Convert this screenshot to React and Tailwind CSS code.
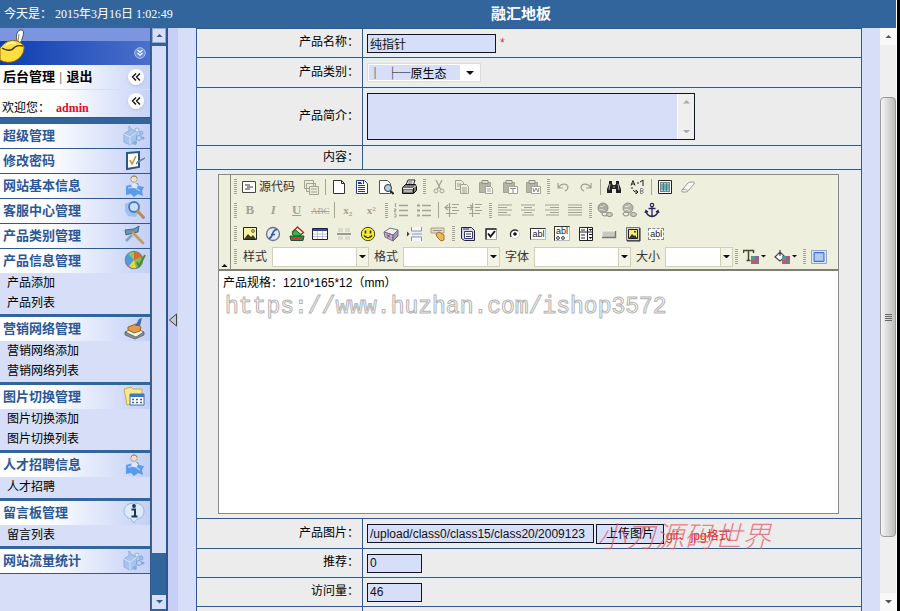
import { useState } from "react";

const G = "#a3a394";

// small toolbar drawings, all on a 16x16 grid
const icons = {
  source: (
    <>
      <path d="M1.5 2.5h13v11h-13z" fill="#fff" stroke="#444" />
      <path d="M4 6h5M6 8h6M4 10h5" stroke="#333" />
    </>
  ),
  templates: (
    <>
      <path d="M1.5 1.5h9v8h-9zM3.5 4.5h9v8h-9z" fill="#ededdc" stroke={G} />
      <path d="M6.500 7.500h9v8h-9zM8 10h6M8 13h6" fill="#ededdc" stroke={G} />
    </>
  ),
  page: <path d="M2.500 1.500h8l3 3v10h-11zM10.500 1.500v3h3" fill="#fff" stroke="#333" />,
  doc: (
    <>
      <path d="M2.500 1.500h8l3 3v10h-11z" fill="#fff" stroke="#223a8a" />
      <path d="M4 4.500h4M4 6.500h7M4 8.500h7M4 10.500h7M4 12.500h7M9.500 2v3M4 3.500h3" stroke="#223a8a" />
    </>
  ),
  preview: (
    <>
      <path d="M1.500 1.500h8l3 3v10h-11z" fill="#fff" stroke="#555" />
      <circle cx="10" cy="9" r="3.500" fill="#a9d4de" stroke="#333" />
      <path d="M12.500 12l3 3" stroke="#222" strokeWidth="2" />
    </>
  ),
  print: (
    <>
      <path d="M5 6l2-5h7l-2 6" fill="#fff" stroke="#222" />
      <path d="M7.500 3h4M7 5h4" stroke="#555" />
      <path d="M1.500 8.500l3-3h10l1 2v4l-3 3h-11z" fill="#77776f" stroke="#111" />
      <path d="M2 9.500h10l3-3M3 12h8" stroke="#eee" />
      <path d="M12.500 9v5" stroke="#111" />
    </>
  ),
  cut: (
    <>
      <path d="M5 1l4.500 9M11 1L6.500 10" stroke={G} strokeWidth="1.300" />
      <circle cx="5" cy="12" r="2" stroke={G} />
      <circle cx="11" cy="12" r="2" stroke={G} />
    </>
  ),
  copy: (
    <>
      <path d="M1.500 1.500h6l2 2v7h-8zM3 5h4M3 7h4" fill="#ededdc" stroke={G} />
      <path d="M6.500 5.500h6l2 2v7h-8zM8 9h5M8 11h5M8 13h5" fill="#ededdc" stroke={G} />
    </>
  ),
  paste: (
    <>
      <path d="M1.500 3.500h11v10h-11z" fill="#b5b5a5" stroke={G} />
      <path d="M4 1.500h6v3H4z" fill="#ddd" stroke="#8f8f82" />
      <path d="M7.500 7.500h5l2 2v5h-7zM9 10h4M9 12h4" fill="#fff" stroke={G} />
    </>
  ),
  pasteText: (
    <>
      <path d="M1.500 3.500h11v10h-11z" fill="#b5b5a5" stroke={G} />
      <path d="M4 1.500h6v3H4z" fill="#ddd" stroke="#8f8f82" />
      <path d="M6.500 7.500h9v7h-9z" fill="#fff" stroke={G} />
      <path d="M8 9.500h6M11 9.500V14" stroke="#888" />
    </>
  ),
  pasteWord: (
    <>
      <path d="M1.500 3.500h11v10h-11z" fill="#b5b5a5" stroke={G} />
      <path d="M4 1.500h6v3H4z" fill="#ddd" stroke="#8f8f82" />
      <path d="M6.500 7.500h9v7h-9z" fill="#fff" stroke={G} />
      <path d="M8 9l1 4 2-4 2 4 1-4" stroke="#888" />
    </>
  ),
  undo: <path d="M3 4v5h5M3.500 8.500C6 4 12 4 13 8c0 2-1 3-3 4" stroke={G} strokeWidth="1.200" />,
  redo: <path d="M13 4v5H8M12.500 8.500C10 4 4 4 3 8c0 2 1 3 3 4" stroke={G} strokeWidth="1.200" />,
  find: (
    <>
      <path d="M3 2h3v3l1 1h2l1-1V2h3v3l2 5v4h-5v-4H6v4H1v-4l2-5z" fill="#222" />
      <path d="M4 5l-1 6M12 5l1 6M8 7v2" stroke="#aaa" />
    </>
  ),
  replace: (
    <>
      <path d="M2 6.500l2-5 2 5M2.800 5h2.600" stroke="#222" />
      <path d="M11.500 9.500v5h2q1.500-1.200 0-2.500h-2 2q1.500-1.200 0-2.500z" stroke="#888" />
      <path d="M8 4h2M11 3l3-2v4M14 5v2M3 8v2M4 11l2 2M7 11v4l2-2z" stroke="#222" />
    </>
  ),
  selectAll: (
    <>
      <path d="M1.500 1.500h13v13h-13z" fill="#fff" stroke="#222" />
      <path d="M3.500 3.500h9v9h-9z" fill="#9fd5de" stroke="#222" strokeDasharray="1 1" />
      <path d="M4 6h8M4 8h8M4 10h8M6.500 4v8M9.500 4v8" stroke="#35707b" strokeWidth=".8" />
    </>
  ),
  eraser: <path d="M2 11l6-7q1-1 3-1h2q2 0 1 2l-6 7q-1 1-3 1H3q-2 0-1-2zM2 10.500q4-1 5.500 1" fill="#fafaf2" stroke="#999" />,
  ol: (
    <>
      <path d="M6 3.500h9M6 8.500h9M6 13.500h9" stroke={G} strokeWidth="1.300" />
      <path d="M2.500 1v4M1 7h2v1.500H1.500V10H3M1 12h2v3H1" stroke={G} />
    </>
  ),
  ul: (
    <>
      <path d="M6 3.500h9M6 8.500h9M6 13.500h9" stroke={G} strokeWidth="1.300" />
      <path d="M1 2.500h3v2H1zM1 7.500h3v2H1zM1 12.500h3v2H1z" fill={G} />
    </>
  ),
  outdent: <path d="M8 2.500h7M8 5.500h5M8 8.500h7M2 11.500h11M1 5.500h6M4 3L1 5.500 4 8M5.500 1v14" stroke={G} strokeWidth="1.200" />,
  indent: <path d="M8 2.500h7M8 5.500h5M8 8.500h7M2 11.500h11M0 5.500h5M3 3l3 2.500L3 8M5.500 1v14" stroke={G} strokeWidth="1.200" />,
  left: <path d="M1 3h14M1 5.500h9M1 8h14M1 10.500h9M1 13h13" stroke={G} strokeWidth="1.200" />,
  center: <path d="M1 3h14M4 5.500h8M1 8h14M4 10.500h8M2 13h12" stroke={G} strokeWidth="1.200" />,
  right: <path d="M1 3h14M6 5.500h9M1 8h14M6 10.500h9M2 13h13" stroke={G} strokeWidth="1.200" />,
  justify: <path d="M1 3h14M1 5.500h14M1 8h14M1 10.500h14M1 13h14" stroke={G} strokeWidth="1.200" />,
  link: (
    <>
      <circle cx="6" cy="6" r="5" fill="#a9a99c" stroke="#96968a" />
      <path d="M3 4q2 2 5-1M2 8q3-2 6 1" stroke="#ddd" />
      <ellipse cx="8" cy="12" rx="3" ry="2" fill="#ededdc" stroke="#88887c" />
      <ellipse cx="12.500" cy="12.500" rx="3" ry="2" fill="#ccccbf" stroke="#88887c" />
    </>
  ),
  unlink: (
    <>
      <circle cx="7" cy="6" r="5" fill="#b5b5a8" stroke="#96968a" />
      <path d="M4 4q2 2 5-1M3 8q3-2 6 1" stroke="#e5e5e5" />
      <ellipse cx="5" cy="12" rx="3" ry="2" fill="#ededdc" stroke="#88887c" />
      <ellipse cx="12.500" cy="12.500" rx="3" ry="2" fill="#ccccbf" stroke="#88887c" />
    </>
  ),
  anchor: (
    <>
      <circle cx="8" cy="3" r="1.700" stroke="#26265f" strokeWidth="1.200" />
      <path d="M8 5v9M4.500 6.500h7M2 9q1 5 6 5.500Q13 14 14 9M1 11l1-2.500L4 10M12 10l2-1.500 1 2.500" stroke="#26265f" strokeWidth="1.300" />
    </>
  ),
  image: (
    <>
      <path d="M1.500 1.500h13v12h-13z" fill="#f7f3a4" stroke="#222" />
      <path d="M2 13l4-5 3 3 2-2 3 4z" fill="#3d3d1b" />
      <circle cx="11" cy="5" r="1.500" fill="#e2b63b" stroke="#333" strokeWidth=".6" />
    </>
  ),
  flash: (
    <>
      <circle cx="8" cy="8" r="6.500" fill="#e3e9f5" stroke="#6a7488" strokeWidth="1.300" />
      <path d="M12 3.500Q8.500 4 7.500 8T4 12.500M6 8.500h4" stroke="#36589f" strokeWidth="1.600" />
    </>
  ),
  gallery: (
    <>
      <path d="M8.500 1l6 5.500-5 4.500-6-5z" fill="#f4f1d0" stroke="#b3281e" strokeWidth="1.300" />
      <path d="M6 3.500l6 5-4 3.500-5-4z" fill="#39b54a" stroke="#116633" />
      <path d="M1 10h14l-1 4.500H2z" fill="#1f9a39" stroke="#115533" />
      <path d="M3 12.500h9" stroke="#dd3333" />
    </>
  ),
  table: (
    <>
      <path d="M.500 2.500h15v11H.500z" fill="#fff" stroke="#222233" />
      <path d="M1 3h14v2H1z" fill="#2f4ba0" />
      <path d="M1 8h14M1 10.500h14M5.500 5v8M10.500 5v8" stroke="#aaaabb" strokeWidth=".7" />
    </>
  ),
  hr: (
    <>
      <path d="M2 3h5M9 3h5M2 5h5M9 5h5M2 11h5M9 11h5M2 13h5M9 13h5" stroke="#c8c8bb" />
      <path d="M1 8h14" stroke="#999" strokeWidth="2" />
    </>
  ),
  smiley: (
    <>
      <circle cx="8" cy="8" r="6.700" fill="#f5ea34" stroke="#4d4a12" />
      <path d="M5.500 4.500v3M10.500 4.500v3" stroke="#222" strokeWidth="1.500" />
      <path d="M4 9.500q4 4.500 8 0" stroke="#222" strokeWidth="1.200" />
    </>
  ),
  special: (
    <>
      <path d="M1 6l6-4 8 2-5 5z" fill="#eee" stroke="#777" />
      <path d="M1 6l9 3v6l-8-4z" fill="#c3b2cf" stroke="#776a88" />
      <path d="M10 9l5-5v6l-5 5z" fill="#9f9bb9" stroke="#666677" />
      <path d="M4 8.500l3 3M6.500 8.500l-2 3" stroke="#a12a5a" />
    </>
  ),
  pageBreak: (
    <>
      <path d="M4.500 1v4h10V1M4.500 15v-4h10v4" fill="#f5f8ff" stroke="#7d93c8" />
      <path d="M5 8h10" stroke="#8d9cc4" />
      <path d="M0 5.500l2.500 2.500L0 10.500z" fill="#333355" />
    </>
  ),
  universal: (
    <>
      <path d="M1 2h13v5H1z" fill="#e1dcc4" stroke="#aa9f83" />
      <path d="M3 4.500h9" stroke="#999" />
      <path d="M6 8l3-2 5 3v5l-3 1-4-4z" fill="#eeb85a" stroke="#a6732b" />
    </>
  ),
  form: (
    <>
      <path d="M1.500 1.500h10l3 3v10h-10l-3-2z" fill="#d8daf3" stroke="#222233" />
      <path d="M4.500 5.500h8v7h-8z" fill="#fff" stroke="#33386f" />
      <path d="M6 8h5M6 10.500h5M3 3h6" stroke="#33386f" />
    </>
  ),
  checkbox: (
    <>
      <path d="M3 3h10.500v10.500H3z" fill="#fff" stroke="#aaa" />
      <path d="M3 13.500V3h10.500" stroke="#222" strokeWidth="1.400" />
      <path d="M5 7.500l2.500 3L12 5" stroke="#111" strokeWidth="1.900" />
    </>
  ),
  radio: (
    <>
      <circle cx="8" cy="8" r="4.500" fill="#fff" stroke="#ccc" />
      <path d="M4 11Q2.500 7 5 5t6 0" stroke="#333" strokeWidth="1.300" />
      <circle cx="8" cy="8" r="1.800" fill="#111" />
    </>
  ),
  select: (
    <>
      <path d="M1.500 1.500h13v13h-13z" fill="#fff" stroke="#222" />
      <path d="M9.500 1.500v13M1.500 6h13M3 4h4M3 9h4M3 12h4" stroke="#222" />
      <path d="M10.500 3h4l-2 2zM10.500 11h4l-2 2z" fill="#111" />
      <path d="M11 8.500h3" stroke="#111" />
    </>
  ),
  button: (
    <>
      <path d="M1 5h13v6H1z" fill="#c9c9c2" />
      <path d="M1 11.500h13.500V5" stroke="#777" strokeWidth="1.400" />
      <path d="M1 11V5h13" stroke="#f5f5f5" />
    </>
  ),
  imageButton: (
    <>
      <path d="M1.500 1.500h13v13h-13z" fill="#d6d6cc" stroke="#777" />
      <path d="M3.500 3.500h9v9h-9z" fill="#f2ee74" stroke="#222" />
      <path d="M4 12l3-4 2 2 1-1 2 3z" fill="#333" />
      <circle cx="10" cy="5.800" r="1" fill="#333" />
      <path d="M15 2v13H2" stroke="#222" />
    </>
  ),
  fit: (
    <>
      <path d="M.500 1.500h15v13H.500z" fill="#dbe8fb" stroke="#8aa5d6" />
      <path d="M3 3.500h10v9H3z" fill="#8db3ec" stroke="#4a74b8" />
      <path d="M4 6h8M4 8h8M4 10h8" stroke="#cfe0fa" />
    </>
  ),
  textColor: (
    <>
      <path d="M0.500 4V1.500h10V4M5.500 1.500V11M3.500 11.500h4" stroke="#4a4632" strokeWidth="1.500" />
      <path d="M8 7h4v4H8z" fill="#4f9a93" />
      <path d="M12 7h4v4h-4z" fill="#a45a8a" />
      <path d="M8 11h4v4H8z" fill="#c3586a" />
      <path d="M12 11h4v4h-4z" fill="#77788a" />
    </>
  ),
  bgColor: (
    <>
      <path d="M1 8l5-5 5 5-5 4zM6 7V1" fill="#fff" stroke="#444" strokeWidth="1.200" />
      <path d="M8 7h4v4H8z" fill="#4f9a93" />
      <path d="M12 7h4v4h-4z" fill="#a45a8a" />
      <path d="M8 11h4v4H8z" fill="#c3586a" />
      <path d="M12 11h4v4h-4z" fill="#77788a" />
    </>
  ),
};

// buttons whose face is lettering
const letters = {
  bold: <b className="text-[13px]">B</b>,
  italic: <i className="text-[13px] font-bold">I</i>,
  underline: <u className="text-[13px] font-bold">U</u>,
  strike: <s className="text-[9px]">ABC</s>,
  sub: <span className="text-[11px] font-bold">x<sub className="text-[7px]">2</sub></span>,
  sup: <span className="text-[11px] font-bold">x<sup className="text-[7px]">2</sup></span>,
};

const fields = {
  text: <span className="border border-[#333] border-r-[#bbb] border-b-[#bbb] bg-white px-px">abl</span>,
  area: (
    <span className="flex flex-col items-start border border-[#333] border-r-[#bbb] border-b-[#bbb] bg-white px-px">
      <span className="leading-[9px]">abl</span>
      <svg viewBox="0 0 10 4" fill="none" className="h-1 w-[10px]">
        <circle cx="2" cy="2" r="1.400" stroke="#333" />
        <circle cx="7" cy="2" r="1.400" stroke="#333" />
      </svg>
    </span>
  ),
  hidden: <span className="border border-dashed border-[#888] bg-white px-px">abl</span>,
};

function Icon({ name }) {
  if (letters[name]) {
    return <span className="font-['Liberation_Serif',serif] leading-4 text-[#a3a394]">{letters[name]}</span>;
  }
  if (fields[name]) {
    return <span className="flex font-['Liberation_Sans',sans-serif] text-[9px] leading-[10px] text-[#222]">{fields[name]}</span>;
  }
  return <svg viewBox="0 0 16 16" fill="none" className="h-4 w-4">{icons[name]}</svg>;
}

function Group({ items, width }) {
  return (
    <div className={"flex h-full " + width}>
      {items.map((name) => (
        <button key={name} type="button" aria-label={name} className="flex min-w-0 flex-1 items-center justify-center">
          <Icon name={name} />
        </button>
      ))}
    </div>
  );
}

function Grip() {
  return (
    <div className="flex h-full w-[6px] shrink-0 items-center justify-center">
      <div className="h-[15px] w-[3px] bg-[repeating-linear-gradient(180deg,#a5a593_0px,#a5a593_1px,transparent_1px,transparent_2px)]" />
    </div>
  );
}

function Sep() {
  return (
    <div className="flex h-full w-1 shrink-0 items-center justify-center">
      <div className="h-4 w-px bg-[#a5a593]" />
    </div>
  );
}

function Combo({ label, width }) {
  return (
    <label className="flex items-center gap-[5px] pl-[5px] text-[12px] text-[#333]">
      {label}
      <span className={"relative flex h-5 " + width}>
        <select className="h-full w-full appearance-none border border-[#cfcfba] bg-white" />
        <span className="pointer-events-none absolute inset-y-px right-px flex w-3 items-center justify-center border-l border-[#cfcfba] bg-[#f3f3e6]">
          <Caret />
        </span>
      </span>
    </label>
  );
}

function Caret({ up, color = "#111", size = "w-[7px]" }) {
  return (
    <svg viewBox="0 0 8 4" className={size}>
      <path d={up ? "M0 4h8L4 0z" : "M0 0h8L4 4z"} fill={color} />
    </svg>
  );
}

function Toolbar() {
  return (
    <div className="flex border-b-2 border-[#7d8072] bg-[#efefde]">
      <button type="button" aria-label="collapse" className="flex w-3 items-end justify-center border-r border-[#8a8a7d] pb-0.5">
        <Caret up />
      </button>
      <div className="flex-1 pb-px pl-px">
        <div className="flex h-[23px] items-center">
          <Grip />
          <button type="button" className="flex w-[61px] items-center gap-[2px] pl-[3px] text-[12px] whitespace-nowrap text-[#333]">
            <Icon name="source" />
            源代码
          </button>
          <Group width="w-6" items={["templates"]} />
          <Sep />
          <Group width="w-[94px]" items={["page", "doc", "preview", "print"]} />
          <Grip />
          <Group width="w-[118px]" items={["cut", "copy", "paste", "pasteText", "pasteWord"]} />
          <Grip />
          <Group width="w-[47px]" items={["undo", "redo"]} />
          <Sep />
          <Group width="w-[47px]" items={["find", "replace"]} />
          <Sep />
          <Group width="w-[47px]" items={["selectAll", "eraser"]} />
        </div>
        <div className="flex h-[24px] items-center">
          <Grip />
          <Group width="w-[94px]" items={["bold", "italic", "underline", "strike"]} />
          <Sep />
          <Group width="w-[47px]" items={["sub", "sup"]} />
          <Grip />
          <Group width="w-[47px]" items={["ol", "ul"]} />
          <Sep />
          <Group width="w-[47px]" items={["outdent", "indent"]} />
          <Grip />
          <Group width="w-[94px]" items={["left", "center", "right", "justify"]} />
          <Grip />
          <Group width="w-[71px]" items={["link", "unlink", "anchor"]} />
        </div>
        <div className="flex h-[23px] items-center">
          <Grip />
          <Group width="w-[212px]" items={["image", "flash", "gallery", "table", "hr", "smiley", "special", "pageBreak", "universal"]} />
          <Grip />
          <Group width="w-[212px]" items={["form", "checkbox", "radio", "text", "area", "select", "button", "imageButton", "hidden"]} />
        </div>
        <div className="flex h-[23px] items-center">
          <Grip />
          <Combo label="样式" width="w-[97px]" />
          <Combo label="格式" width="w-[97px]" />
          <Combo label="字体" width="w-[97px]" />
          <Combo label="大小" width="w-[68px]" />
          <Grip />
          <button type="button" aria-label="textColor" className="flex items-center gap-0.5 px-1">
            <Icon name="textColor" />
            <Caret size="w-[5px]" />
          </button>
          <button type="button" aria-label="bgColor" className="flex items-center gap-0.5 px-1">
            <Icon name="bgColor" />
            <Caret size="w-[5px]" />
          </button>
          <Grip />
          <Group width="w-6" items={["fit"]} />
        </div>
      </div>
    </div>
  );
}

const menuIcons = {
  cubes: (
    <>
      <path d="M2 10l7-5 6 3-1 10-6 3-6-3z" fill="#a8c4ee" stroke="#8fafe0" />
      <path d="M2 10l6 3 7-5M8 13v8" stroke="#d3e3fa" />
      <path d="M7 6V2l2 3" fill="#cfe0f8" stroke="#8aa9d8" />
      <circle cx="15" cy="6" r="2" fill="#d9e8fb" stroke="#7fa0cf" strokeWidth=".7" />
      <circle cx="19" cy="9" r="2" fill="#9fc0ec" stroke="#7fa0cf" strokeWidth=".7" />
      <circle cx="17" cy="14" r="2.500" fill="#bcd4f5" stroke="#6d90c6" strokeWidth=".7" />
      <circle cx="21" cy="14" r="1.500" fill="#86aadf" />
      <circle cx="13" cy="19" r="2" fill="#86aadf" />
    </>
  ),
  note: (
    <>
      <path d="M5 4l12-1v15l-12 2z" fill="#fff" stroke="#2e5685" strokeWidth="2" />
      <path d="M8 11l2 4 4-8" stroke="#b59a3c" strokeWidth="1.600" />
      <path d="M14 15l9-6-7 3z" fill="#93a9bd" stroke="#5f7c96" />
    </>
  ),
  user: (
    <>
      <path d="M4 12l7-2 5-1 1 3 5 1-2 4 1 5-5-2-4 3-3-3-5 1z" fill="#5b9bee" />
      <path d="M6 14l6-1 6 4" stroke="#a8cdfb" strokeWidth="1.500" />
      <path d="M9 11q3-4 7 0l-1 3h-5z" fill="#dce8f8" />
      <circle cx="12" cy="5" r="3.300" fill="#f3dccb" stroke="#b3a6a0" />
      <path d="M9 4q3-4 6 0" stroke="#a6794a" />
    </>
  ),
  search: (
    <>
      <path d="M3 5l5-2 7 2 3 6-4 7-8-1-3-5z" fill="#9cc1f1" />
      <circle cx="12" cy="8" r="5" fill="#c5def9" stroke="#4b78b4" strokeWidth="1.800" />
      <path d="M15.500 12l6 6.500" stroke="#b98a53" strokeWidth="3" strokeLinecap="round" />
    </>
  ),
  hammer: (
    <>
      <path d="M3 6l9-1 5-3-1 6-5 1-7 2z" fill="#6f94b2" stroke="#46677f" />
      <path d="M4 17l6-6" stroke="#7ba3cf" strokeWidth="2.500" />
      <path d="M11 9l10 10" stroke="#c29a62" strokeWidth="2.800" strokeLinecap="round" />
    </>
  ),
  pie: (
    <>
      <circle cx="12" cy="11" r="8.500" fill="#7cc25b" stroke="#75808f" strokeWidth="1.500" />
      <path d="M12 11V3a8 8 0 0 1 7 5z" fill="#e9632e" />
      <path d="M12 11L6 5a8 8 0 0 1 6-2z" fill="#7fd055" />
      <path d="M12 11L6 5a8 8 0 0 0 1 12z" fill="#4d9be2" />
      <path d="M12 11l-5 6a8 8 0 0 0 7 2z" fill="#f4d23c" />
      <path d="M15 13l2 4 6-11" stroke="#4b8a36" strokeWidth="2" />
    </>
  ),
  stamp: (
    <>
      <path d="M3 15l9-4 10 4-8 6z" fill="#f5f5f0" stroke="#777" />
      <path d="M3 15v3l10 4 9-4v-3l-8 5z" fill="#8c8f94" stroke="#555" strokeWidth=".7" />
      <path d="M6 10l8-3 5 3-1 4-6 2-6-3z" fill="#e29b45" stroke="#9b6526" />
      <path d="M13 9l4-7 3-1-2 8z" fill="#3f6eb9" />
    </>
  ),
  folder: (
    <>
      <path d="M2 4l7-2 2 2h9v14l-15 2z" fill="#f7e88b" stroke="#c4ac4d" />
      <path d="M8 9h14v11H8z" fill="#fff" stroke="#3f6cae" />
      <path d="M8 9h14v3H8z" fill="#3f78c9" />
      <path d="M10 14.500h10M10 17.500h10" stroke="#44638c" strokeWidth="1.500" strokeDasharray="2 2" />
    </>
  ),
  info: (
    <>
      <path d="M12 2c6 0 10 3 10 8s-3 7-7 8l-3 4-3-4c-4-1-7-4-7-8s4-8 10-8z" fill="#dbe9f8" stroke="#9db7d4" />
      <circle cx="12" cy="5" r="1.900" fill="#193560" />
      <path d="M9.500 8.500H13v6.500M9.500 15.500h6" stroke="#193560" strokeWidth="2" />
    </>
  ),
};

const menu = [
  { title: "超级管理", icon: "cubes" },
  { title: "修改密码", icon: "note" },
  { title: "网站基本信息", icon: "user" },
  { title: "客服中心管理", icon: "search" },
  { title: "产品类别管理", icon: "hammer" },
  { title: "产品信息管理", icon: "pie", links: ["产品添加", "产品列表"] },
  { title: "营销网络管理", icon: "stamp", links: ["营销网络添加", "营销网络列表"] },
  { title: "图片切换管理", icon: "folder", links: ["图片切换添加", "图片切换列表"] },
  { title: "人才招聘信息", icon: "user", links: ["人才招聘"] },
  { title: "留言板管理", icon: "info", links: ["留言列表"] },
  { title: "网站流量统计", icon: "cubes" },
];

function Chevron() {
  return (
    <span className="flex h-4 w-4 items-center justify-center rounded-full bg-white shadow">
      <svg viewBox="0 0 10 10" fill="none" className="h-[10px] w-[10px]">
        <path d="M5 1.500L1.500 5 5 8.500M9 1.500L5.500 5 9 8.500" stroke="#111" strokeWidth="1.400" />
      </svg>
    </span>
  );
}

function Sidebar() {
  return (
    <aside className="flex w-[168px] shrink-0 border-r-2 border-[#2b5596]">
      <div className="relative w-[151px] border-r border-[#31598c] bg-[#d6dff7]">
        <div className="h-[13px] bg-[#7b96df]" />
        <div className="flex h-6 items-center justify-end bg-linear-to-r from-[#0a3cb0] to-[#4b70cb] pr-1">
          <svg viewBox="0 0 12 12" fill="none" className="h-3 w-3">
            <circle cx="6" cy="6" r="5.300" fill="#6d8ed8" stroke="#a9bff0" />
            <path d="M3.500 3L6 5.300 8.500 3M3.500 6L6 8.300 8.500 6" stroke="#fff" strokeWidth="1.200" />
          </svg>
        </div>
        <svg viewBox="0 0 28 36" fill="none" className="absolute top-0 left-0 h-9 w-7">
          <path d="M17 14Q15 4 20 2q5-1 3 6-1 5-4 8z" fill="#fff" stroke="#555" />
          <path d="M19 6l-1 8" stroke="#888" />
          <path d="M0 20Q8 10 17 13q8 3 7 8-1 8-9 12-8 3-15-1z" fill="#ffdf3f" stroke="#8c6a06" />
          <path d="M2 20q8 5 13-1 3-2 8-1" stroke="#40300a" strokeWidth="1.300" />
          <path d="M6 17q5-4 10-1" stroke="#fff6a8" strokeWidth="2" />
        </svg>
        <div className="flex h-[25px] items-center justify-between border-b border-[#d6dff7] bg-linear-to-r from-white from-40% to-[#c6d3f7] pr-1.5 pl-[3px]">
          <div className="flex gap-1 text-[13px] font-bold text-black">
            <a href="#home">后台管理</a>
            <span className="font-normal text-[#888]">|</span>
            <a href="#exit">退出</a>
          </div>
          <Chevron />
        </div>
        <div className="flex h-7 justify-between border-b border-[#31598c] bg-linear-to-r from-white from-40% to-[#c6d3f7] pt-[3px] pr-1.5 pl-[2px]">
          <div className="flex items-end text-[12px]">
            欢迎您：
            <b className="pl-[6px] font-['Liberation_Serif',serif] text-[#d8101c]">admin</b>
          </div>
          <Chevron />
        </div>
        <div className="h-[6px] bg-[#31659c]" />
        {menu.map((m, i) => (
          <nav key={m.title} className={m.links || i === menu.length - 2 ? "border-b-[3px] border-[#31659c]" : "border-b border-[#31598c]"}>
            <div className="flex h-6 items-center justify-between bg-linear-to-r from-white from-30% to-[#c3d0f6] pr-1 pl-[3px]">
              <a href="#menu" className="text-[13px] font-bold text-[#2a5798]">{m.title}</a>
              <svg viewBox="0 0 24 24" fill="none" className="h-6 w-6">{menuIcons[m.icon]}</svg>
            </div>
            {m.links && (
              <ul className="pb-px pl-[7px] text-[12px] leading-5 text-black">
                {m.links.map((l) => (
                  <li key={l} className="h-5"><a href="#page">{l}</a></li>
                ))}
              </ul>
            )}
          </nav>
        ))}
      </div>
      <div className="flex flex-1 flex-col bg-[#31659c] pl-px">
        <div className="flex h-[15px] items-center justify-center border border-[#8fa9d4] bg-[#d6dff7]"><Caret up color="#3c5a86" /></div>
        <div className="mt-[3px] flex-1 bg-[#d6dff7]" />
        <div className="h-[42px]" />
        <div className="mb-[2px] flex h-[14px] items-center justify-center bg-[#d6dff7]"><Caret color="#3c5a86" /></div>
      </div>
    </aside>
  );
}

const input = "h-[19px] rounded-none border border-[#101428] bg-[#d6dff7] px-[2px] text-[12px] text-[#111]";

function Row({ label, id, height, children }) {
  return (
    <tr className={height}>
      <th scope="row" className="w-[166px] border border-[#31598c] bg-[#ececec] p-0 pr-[3px] pb-0.5 text-right font-normal shadow-[inset_0_0_0_1px_#e4eff7]">
        {id ? <label htmlFor={id}>{label}</label> : label}
      </th>
      <td className="border border-[#31598c] bg-[#ececec] p-0 pl-1 shadow-[inset_0_0_0_1px_#e4eff7]">{children}</td>
    </tr>
  );
}

function ProductForm() {
  const [name, setName] = useState("纯指针");
  const [intro, setIntro] = useState("");
  const [picture, setPicture] = useState("/upload/class0/class15/class20/2009123");
  const [recommend, setRecommend] = useState("0");
  const [visits, setVisits] = useState("46");

  return (
    <table className="w-full table-fixed border-collapse text-[12px] leading-4 text-black">
      <colgroup>
        <col className="w-[166px]" />
        <col />
      </colgroup>
      <tbody>
        <Row label="产品名称：" id="name" height="h-[29px]">
          <div className="flex items-center gap-1">
            <input id="name" className={input + " w-[129px]"} value={name} onChange={(e) => setName(e.target.value)} />
            <span className="text-[#e0303a]">*</span>
          </div>
        </Row>
        <Row label="产品类别：" id="kind" height="h-[30px]">
          <div className="relative flex h-[19px] w-[114px] border border-[#dcdcdc] bg-white p-px">
            <select id="kind" className="w-[91px] appearance-none bg-[#d6dff7] font-['Noto_Sans_CJK_SC',sans-serif] text-[12px] leading-[15px] text-black">
              <option>│&nbsp;&nbsp;├─原生态</option>
            </select>
            <span className="flex flex-1 items-center justify-center"><Caret size="w-2" /></span>
          </div>
        </Row>
        <Row label="产品简介：" id="intro" height="h-[58px]">
          <div className="flex h-[47px] w-[328px] border border-[#101428] bg-white">
            <textarea id="intro" className="flex-1 resize-none bg-[#d6dff7]" value={intro} onChange={(e) => setIntro(e.target.value)} />
            <div className="ml-px flex w-4 flex-col items-center justify-between bg-[#efefef] py-[6px]">
              <Caret up color="#aaa" />
              <Caret color="#aaa" />
            </div>
          </div>
        </Row>
        <Row label="内容：" height="h-6" />
        <tr className="h-[349px]">
          <td colSpan={2} className="border border-[#31598c] bg-[#ececec] py-1 pr-[22px] pl-[21px] shadow-[inset_0_0_0_1px_#e4eff7]">
            <div className="flex h-[340px] flex-col border border-[#8a8a84] bg-white">
              <Toolbar />
              <div className="flex-1 px-1 pt-[2px]">
                <p className="text-[12px] leading-5">产品规格：1210*165*12（mm）</p>
                <p className="pl-0.5 font-['Liberation_Mono',monospace] text-[23px] leading-7 text-white [-webkit-text-stroke:1px_#b4b4b4]">
                  https://www.huzhan.com/ishop3572
                </p>
              </div>
            </div>
          </td>
        </tr>
        <Row label="产品图片：" id="picture" height="h-[30px]">
          <div className="relative flex items-center gap-[2px]">
            <input id="picture" className={input + " w-[227px]"} value={picture} onChange={(e) => setPicture(e.target.value)} />
            <button type="button" className="h-5 w-[68px] border border-[#101428] bg-[#d6dff7] leading-4">上传图片</button>
            <span className="pt-1 text-[#d8262c]">gif、jpg格式</span>
            <span className="pointer-events-none absolute left-[230px] font-['Noto_Sans_CJK_SC',sans-serif] text-[29px] leading-8 font-light whitespace-nowrap text-[#e0505c]/70 italic">
              小刀源码世界
            </span>
          </div>
        </Row>
        <Row label="推荐：" id="recommend" height="h-[29px]">
          <input id="recommend" className={input + " block w-[55px]"} value={recommend} onChange={(e) => setRecommend(e.target.value)} />
        </Row>
        <Row label="访问量：" id="visits" height="h-[29px]">
          <input id="visits" className={input + " block w-[55px]"} value={visits} onChange={(e) => setVisits(e.target.value)} />
        </Row>
        <Row height="h-[29px]" />
      </tbody>
    </table>
  );
}

function PageScroll() {
  return (
    <div className="flex w-4 shrink-0 flex-col bg-[#efefef]">
      <div className="flex h-[17px] items-center justify-center bg-[#f8f8f8]"><Caret up color="#555" /></div>
      <div className="h-[52px]" />
      <div className="flex flex-1 flex-col items-center justify-center gap-px rounded-sm border border-[#999] bg-linear-to-r from-[#f6f6f6] to-[#bdbdbd]">
        <span className="h-px w-[7px] bg-[#666]" />
        <span className="h-px w-[7px] bg-[#666]" />
        <span className="h-px w-[7px] bg-[#666]" />
        <span className="h-px w-[7px] bg-[#666]" />
      </div>
      <div className="h-14" />
      <div className="flex h-[18px] items-center justify-center bg-[#f8f8f8]"><Caret color="#555" /></div>
    </div>
  );
}

function App() {
  return (
    <div className="flex h-screen flex-col overflow-hidden border-r-[3px] border-black bg-white pr-px font-['Liberation_Sans','Noto_Sans_CJK_SC',sans-serif]">
      <header className="flex h-7 shrink-0 items-center bg-[#31659c] text-white">
        <div className="w-44 pl-1 font-['Liberation_Serif','Noto_Sans_CJK_SC',serif] text-[12px]">今天是： 2015年3月16日 1:02:49</div>
        <h1 className="flex-1 pr-[30px] text-center text-[15px] font-bold">融汇地板</h1>
      </header>
      <div className="flex min-h-0 flex-1">
        <Sidebar />
        <button type="button" aria-label="toggle" className="flex w-[10px] shrink-0 items-center justify-center bg-[#c6cff5]">
          <svg viewBox="0 0 8 14" className="h-[14px] w-2">
            <path d="M7.500 1v12L.500 7z" fill="#c5c9d5" stroke="#444" />
          </svg>
        </button>
        <main className="min-w-0 flex-1 overflow-hidden bg-[#d6dff7] px-[18px]">
          <ProductForm />
        </main>
        <PageScroll />
      </div>
    </div>
  );
}

export default App;
